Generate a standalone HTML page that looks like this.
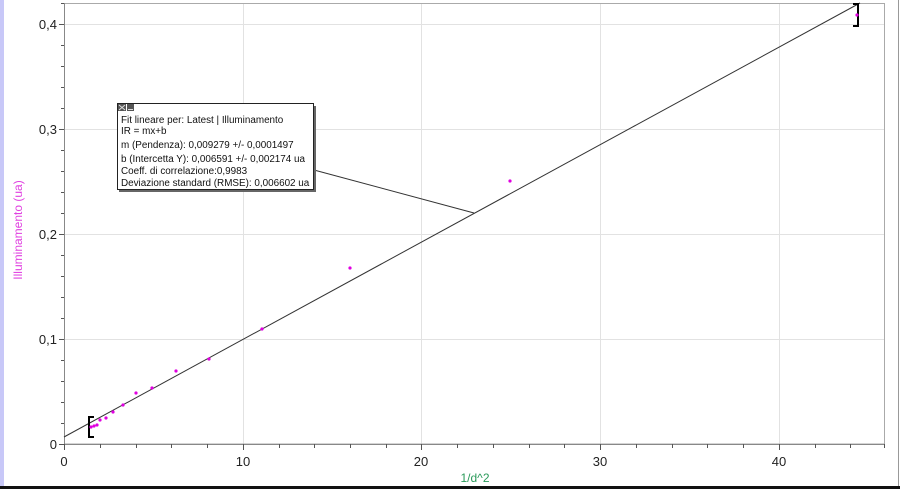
<!DOCTYPE html>
<html><head><meta charset="utf-8"><style>
html,body{margin:0;padding:0;background:#fff;width:900px;height:489px;overflow:hidden}
svg{display:block;font-family:"Liberation Sans",sans-serif}
</style></head><body>
<svg width="900" height="489" viewBox="0 0 900 489" xmlns="http://www.w3.org/2000/svg">
<rect x="0" y="0" width="900" height="489" fill="#fff"/>
<rect x="0" y="0" width="4" height="489" fill="#c8c8f8"/>
<line x1="898.5" y1="0" x2="898.5" y2="489" stroke="#999"/>
<rect x="0" y="486" width="900" height="3" fill="#111"/>
<g stroke="#e2e2e2" stroke-width="1">
<line x1="243.5" y1="3" x2="243.5" y2="444"/><line x1="421.5" y1="3" x2="421.5" y2="444"/>
<line x1="600.5" y1="3" x2="600.5" y2="444"/><line x1="779.5" y1="3" x2="779.5" y2="444"/>
<line x1="64" y1="339.5" x2="885" y2="339.5"/><line x1="64" y1="234.5" x2="885" y2="234.5"/>
<line x1="64" y1="129.5" x2="885" y2="129.5"/><line x1="64" y1="24.5" x2="885" y2="24.5"/>
</g>
<rect x="64.5" y="3.5" width="820" height="440.5" fill="none" stroke="#aaa"/>
<line x1="64.5" y1="3" x2="64.5" y2="444" stroke="#888"/>
<line x1="64" y1="444.5" x2="885" y2="444.5" stroke="#888"/>
<g stroke="#555">
<line x1="59" y1="444.5" x2="64" y2="444.5"/><line x1="59" y1="339.5" x2="64" y2="339.5"/>
<line x1="59" y1="234.5" x2="64" y2="234.5"/><line x1="59" y1="129.5" x2="64" y2="129.5"/>
<line x1="59" y1="24.5" x2="64" y2="24.5"/>
<line x1="64.5" y1="444" x2="64.5" y2="450"/><line x1="243.5" y1="444" x2="243.5" y2="450"/>
<line x1="421.5" y1="444" x2="421.5" y2="450"/><line x1="600.5" y1="444" x2="600.5" y2="450"/>
<line x1="779.5" y1="444" x2="779.5" y2="450"/>
</g>
<g stroke="#555">
<line x1="61" y1="423.5" x2="64" y2="423.5"/><line x1="61" y1="402.5" x2="64" y2="402.5"/><line x1="61" y1="381.5" x2="64" y2="381.5"/><line x1="61" y1="360.5" x2="64" y2="360.5"/>
<line x1="61" y1="318.5" x2="64" y2="318.5"/><line x1="61" y1="297.5" x2="64" y2="297.5"/><line x1="61" y1="276.5" x2="64" y2="276.5"/><line x1="61" y1="255.5" x2="64" y2="255.5"/>
<line x1="61" y1="213.5" x2="64" y2="213.5"/><line x1="61" y1="192.5" x2="64" y2="192.5"/><line x1="61" y1="171.5" x2="64" y2="171.5"/><line x1="61" y1="150.5" x2="64" y2="150.5"/>
<line x1="61" y1="108.5" x2="64" y2="108.5"/><line x1="61" y1="87.5" x2="64" y2="87.5"/><line x1="61" y1="66.5" x2="64" y2="66.5"/><line x1="61" y1="45.5" x2="64" y2="45.5"/>
<line x1="61" y1="3.5" x2="64" y2="3.5"/>
<line x1="100.5" y1="444" x2="100.5" y2="448"/><line x1="136.5" y1="444" x2="136.5" y2="448"/><line x1="171.5" y1="444" x2="171.5" y2="448"/><line x1="207.5" y1="444" x2="207.5" y2="448"/>
<line x1="279.5" y1="444" x2="279.5" y2="448"/><line x1="314.5" y1="444" x2="314.5" y2="448"/><line x1="350.5" y1="444" x2="350.5" y2="448"/><line x1="386.5" y1="444" x2="386.5" y2="448"/>
<line x1="457.5" y1="444" x2="457.5" y2="448"/><line x1="493.5" y1="444" x2="493.5" y2="448"/><line x1="529.5" y1="444" x2="529.5" y2="448"/><line x1="564.5" y1="444" x2="564.5" y2="448"/>
<line x1="636.5" y1="444" x2="636.5" y2="448"/><line x1="672.5" y1="444" x2="672.5" y2="448"/><line x1="707.5" y1="444" x2="707.5" y2="448"/><line x1="743.5" y1="444" x2="743.5" y2="448"/>
<line x1="815.5" y1="444" x2="815.5" y2="448"/><line x1="850.5" y1="444" x2="850.5" y2="448"/><line x1="884.5" y1="444" x2="884.5" y2="448"/>
</g>
<g font-size="13" fill="#222">
<text x="57" y="449" text-anchor="end">0</text>
<text x="57" y="344" text-anchor="end">0,1</text>
<text x="57" y="239" text-anchor="end">0,2</text>
<text x="57" y="134" text-anchor="end">0,3</text>
<text x="57" y="29" text-anchor="end">0,4</text>
<text x="64" y="466" text-anchor="middle">0</text>
<text x="243" y="466" text-anchor="middle">10</text>
<text x="421" y="466" text-anchor="middle">20</text>
<text x="600" y="466" text-anchor="middle">30</text>
<text x="779" y="466" text-anchor="middle">40</text>
</g>
<text x="475" y="482" text-anchor="middle" font-size="12" fill="#2a9a5a">1/d^2</text>
<text transform="translate(22,230) rotate(-90)" text-anchor="middle" font-size="12" fill="#e040e0">Illuminamento (ua)</text>
<line x1="64" y1="437" x2="860" y2="3" stroke="#333" stroke-width="1"/>
<line x1="314" y1="170" x2="474" y2="213" stroke="#333" stroke-width="1"/>
<path d="M94,417 H89 V437 H94" fill="none" stroke="#000" stroke-width="2"/>
<path d="M853,4 H858 V26 H853" fill="none" stroke="#000" stroke-width="2"/>
<g fill="#e000e0">
<circle cx="91" cy="427" r="1.6"/><circle cx="94" cy="426" r="1.6"/><circle cx="97" cy="425" r="1.6"/>
<circle cx="100" cy="420" r="1.6"/><circle cx="106" cy="418" r="1.6"/><circle cx="113" cy="412" r="1.6"/>
<circle cx="123" cy="405" r="1.6"/><circle cx="136" cy="393" r="1.6"/><circle cx="152" cy="388" r="1.6"/>
<circle cx="176" cy="371" r="1.6"/><circle cx="209" cy="359" r="1.6"/><circle cx="262" cy="329" r="1.6"/>
<circle cx="350" cy="268" r="1.6"/><circle cx="510" cy="181" r="1.6"/><circle cx="857" cy="15" r="1.6"/>
</g>
<rect x="119" y="106" width="197" height="86" fill="#666"/>
<rect x="117.5" y="103.5" width="196" height="86" fill="#fff" stroke="#222"/>
<rect x="118" y="104" width="8" height="7" fill="#555"/>
<path d="M119,105 L125,110 M125,105 L119,110" stroke="#ddd"/>
<rect x="127" y="104" width="7" height="7" fill="#555"/>
<line x1="128" y1="109.5" x2="133" y2="109.5" stroke="#ddd"/>
<g font-size="9.9" fill="#111">
<text x="121" y="123">Fit lineare per: Latest | Illuminamento</text>
<text x="121" y="134">IR = mx+b</text>
<text x="121" y="148">m (Pendenza): 0,009279 +/- 0,0001497</text>
<text x="121" y="162">b (Intercetta Y): 0,006591 +/- 0,002174 ua</text>
<text x="121" y="174">Coeff. di correlazione:0,9983</text>
<text x="121" y="186">Deviazione standard (RMSE): 0,006602 ua</text>
</g>
</svg>
</body></html>
